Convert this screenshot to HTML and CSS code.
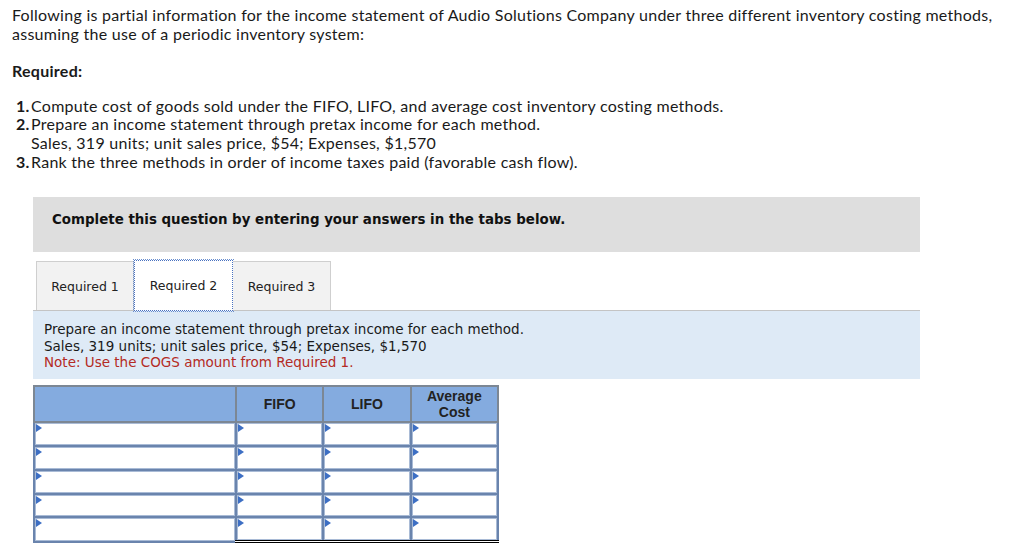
FILE: index.html
```html
<!DOCTYPE html>
<html>
<head>
<meta charset="utf-8">
<link rel="stylesheet" href="styles.css">
</head>
<body>
<div class="intro">
  <p class="lead">Following is partial information for the income statement of Audio Solutions Company under three different inventory costing methods, assuming the use of a periodic inventory system:</p>
  <p class="req-title">Required:</p>
  <ol class="reqs">
    <li><b>1.</b><span>Compute cost of goods sold under the FIFO, LIFO, and average cost inventory costing methods.</span></li>
    <li><b>2.</b><span>Prepare an income statement through pretax income for each method.<br>Sales, 319 units; unit sales price, $54; Expenses, $1,570</span></li>
    <li><b>3.</b><span>Rank the three methods in order of income taxes paid (favorable cash flow).</span></li>
  </ol>
</div>
<div class="question">
  <div class="banner">Complete this question by entering your answers in the tabs below.</div>
  <div class="tabs">
    <div class="tab">Required 1</div>
    <div class="tab active">Required 2</div>
    <div class="tab">Required 3</div>
  </div>
  <div class="panel">
    <div>Prepare an income statement through pretax income for each method.</div>
    <div>Sales, 319 units; unit sales price, $54; Expenses, $1,570</div>
    <div class="note">Note: Use the COGS amount from Required 1.</div>
  </div>
  <table class="grid">
    <thead>
      <tr><th class="c1"></th><th>FIFO</th><th>LIFO</th><th>Average<br>Cost</th></tr>
    </thead>
    <tbody>
      <tr><td class="c1"><i></i></td><td><i></i></td><td><i></i></td><td><i></i></td></tr>
      <tr><td class="c1"><i></i></td><td><i></i></td><td><i></i></td><td><i></i></td></tr>
      <tr><td class="c1"><i></i></td><td><i></i></td><td><i></i></td><td><i></i></td></tr>
      <tr><td class="c1"><i></i></td><td><i></i></td><td><i></i></td><td><i></i></td></tr>
      <tr class="total"><td class="c1"><i></i></td><td><i></i></td><td><i></i></td><td><i></i></td></tr>
    </tbody>
  </table>
</div>
</body>
</html>
```
FILE: styles.css
```css
html, body { margin: 0; padding: 0; background: #fff; }
body { font-family: "Lato", "Open Sans", sans-serif; color: #1a1a1a; }
.intro { padding: 6px 12px 0 12px; font-size: 16px; letter-spacing: 0.27px; line-height: 18.6px; }
.lead { margin: 0; }
.req-title { margin: 19px 0 0 0; font-weight: bold; }
.reqs { list-style: none; margin: 16px 0 0 0; padding: 0 0 0 4px; }
.reqs li { display: flex; }
.reqs li b { width: 15px; flex: none; }
.question { margin: 26px 0 0 33px; width: 887px; }
.banner { background: #dedede; height: 55px; box-sizing: border-box; padding: 15px 0 0 19px; font-family: "DejaVu Sans", Verdana, sans-serif; font-weight: bold; font-size: 13.4px; color: #111; }
.tabs { display: flex; margin: 9px 0 0 3px; height: 49px; }
.tab { box-sizing: border-box; width: 98px; border: 1px solid #cfcfcf; border-bottom: none; background: #f2f2f2; font-family: "DejaVu Sans", Verdana, sans-serif; font-size: 12.5px; display: flex; align-items: center; justify-content: center; color: #222; }
.tab + .tab { border-left: none; }
.tab.active { background: #fff; border: 1px dotted #4a72c0; outline: 1px dotted #6a8fd0; width: 99px; height: 51px; margin-top: -1px; }
.panel { background: #deeaf6; border-top: 1px solid #c4c4c4; height: 69px; box-sizing: border-box; padding: 10px 11px; font-family: "DejaVu Sans", Verdana, sans-serif; font-size: 13.5px; line-height: 16.5px; color: #1a1a1a; }
.note { color: #b42a24; }
.grid { margin-top: 6px; border-collapse: collapse; border: 2px solid #7c8794; table-layout: fixed; width: 466px; }
.grid th { background: #84abdf; height: 34px; border: 2px solid #7c8794; font-family: "Liberation Sans", Arial, sans-serif; font-weight: bold; font-size: 14px; line-height: 16px; color: #222; padding: 0; }
.grid th.c1 { width: 200px; }
.grid td { height: 21.8px; border: 2px solid #6a84ad; padding: 0; position: relative; background: #fff; box-shadow: inset 0 0 0 1px #a9bbd6; }
.grid td i { position: absolute; left: 1px; top: 1px; width: 0; height: 0; border-top: 4px solid transparent; border-bottom: 4px solid transparent; border-left: 6px solid #3d6fc4; }
.grid tr.total td:not(.c1) { border-bottom: 3px double #000; }
```
